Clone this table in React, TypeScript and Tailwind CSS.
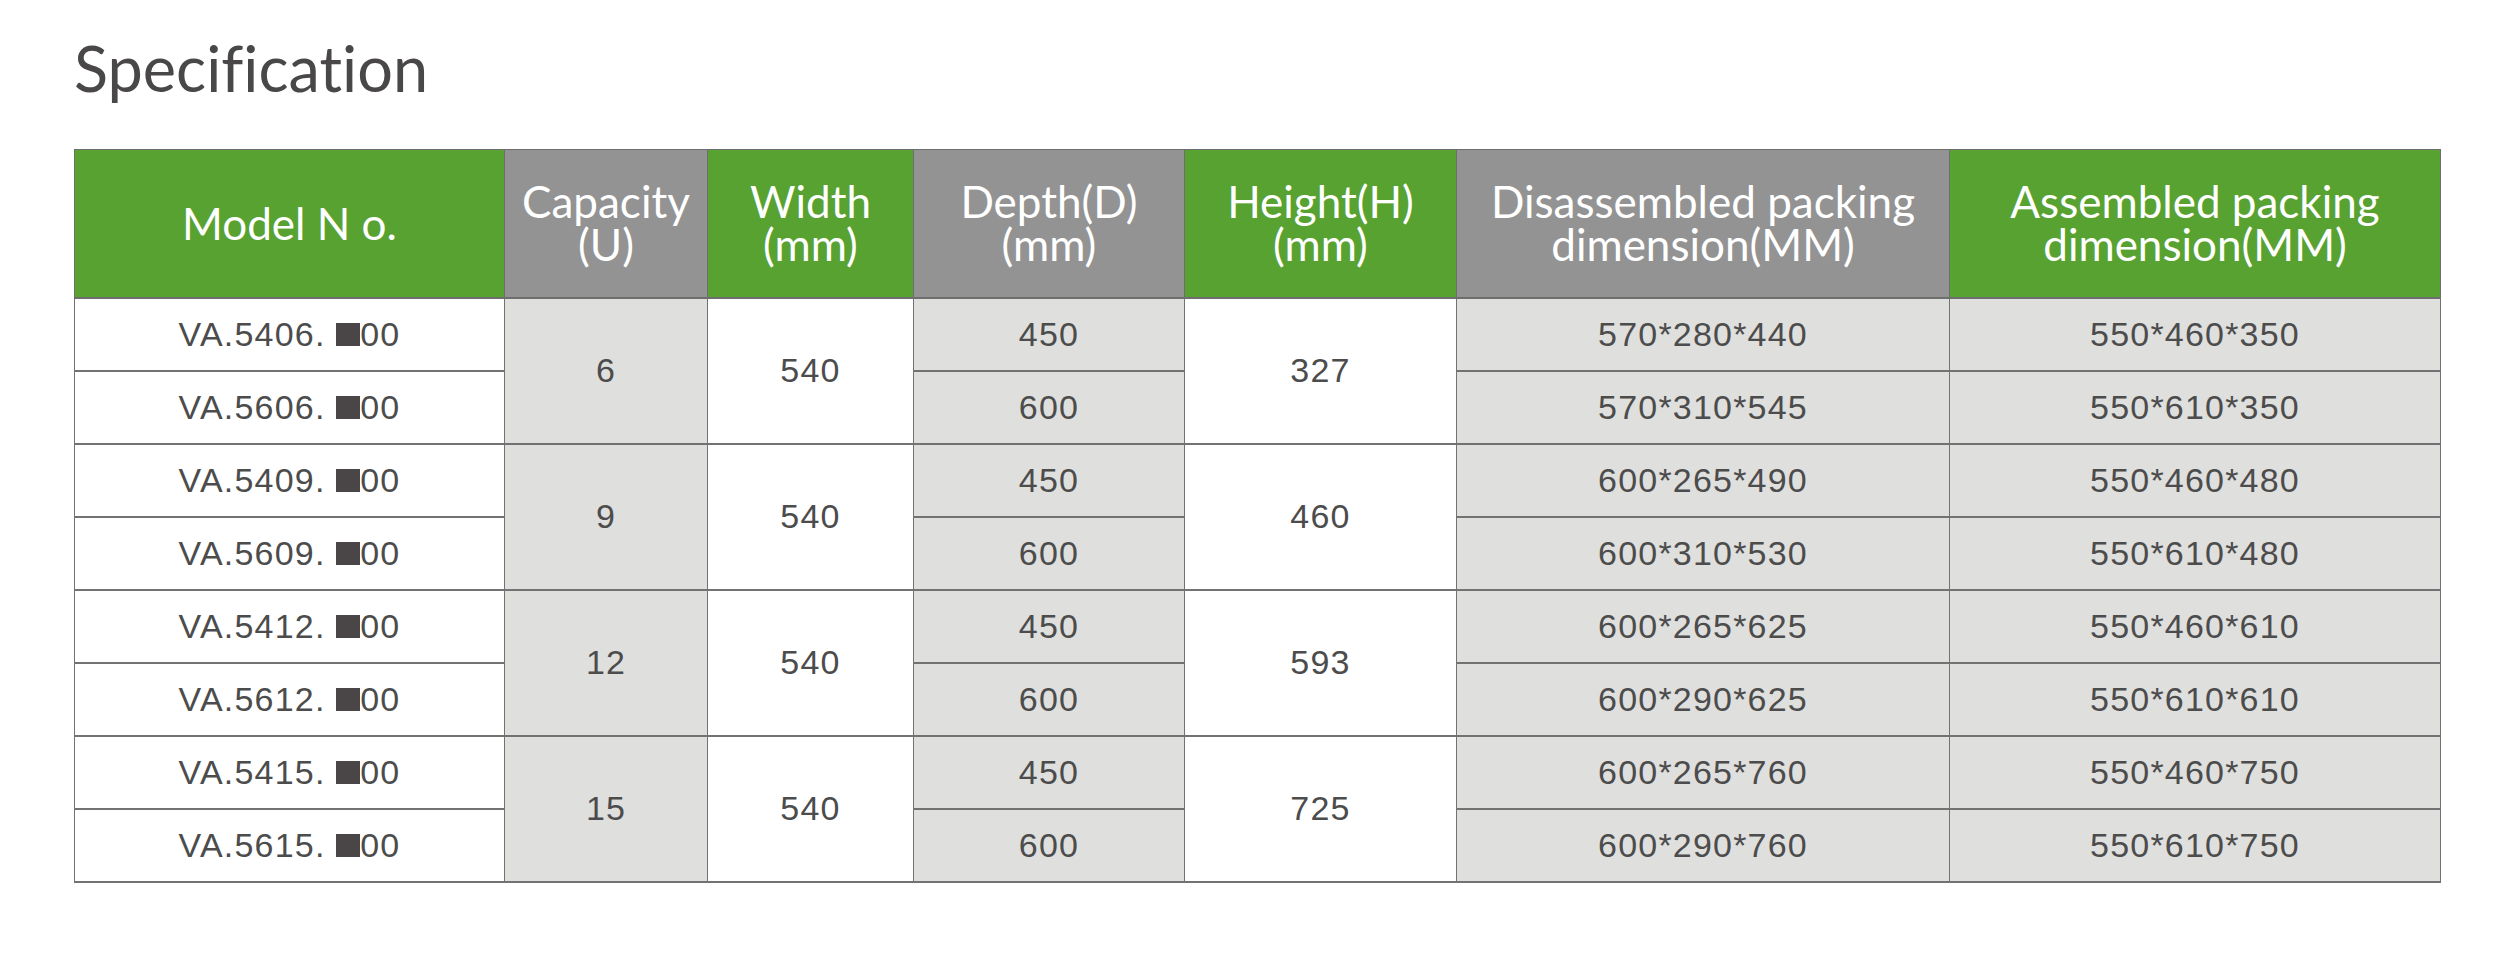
import React from 'react';

type Item = { model: string; depth: string; dis: string; asm: string };
type Group = { cap: string; width: string; height: string; items: Item[] };

const groups: Group[] = [
    {
        cap: '6', width: '540', height: '327', items: [
            { model: 'VA.5406.', depth: '450', dis: '570*280*440', asm: '550*460*350' },
            { model: 'VA.5606.', depth: '600', dis: '570*310*545', asm: '550*610*350' },
        ],
    },
    {
        cap: '9', width: '540', height: '460', items: [
            { model: 'VA.5409.', depth: '450', dis: '600*265*490', asm: '550*460*480' },
            { model: 'VA.5609.', depth: '600', dis: '600*310*530', asm: '550*610*480' },
        ],
    },
    {
        cap: '12', width: '540', height: '593', items: [
            { model: 'VA.5412.', depth: '450', dis: '600*265*625', asm: '550*460*610' },
            { model: 'VA.5612.', depth: '600', dis: '600*290*625', asm: '550*610*610' },
        ],
    },
    {
        cap: '15', width: '540', height: '725', items: [
            { model: 'VA.5415.', depth: '450', dis: '600*265*760', asm: '550*460*750' },
            { model: 'VA.5615.', depth: '600', dis: '600*290*760', asm: '550*610*750' },
        ],
    },
];

const headers = [
    { lines: ['Model N o.'], green: true, w: 'w-[430px]' },
    { lines: ['Capacity', '(U)'], green: false, w: 'w-[203px]' },
    { lines: ['Width', '(mm)'], green: true, w: 'w-[206px]' },
    { lines: ['Depth(D)', '(mm)'], green: false, w: 'w-[271px]' },
    { lines: ['Height(H)', '(mm)'], green: true, w: 'w-[272px]' },
    { lines: ['Disassembled packing', 'dimension(MM)'], green: false, w: 'w-[493px]' },
    { lines: ['Assembled packing', 'dimension(MM)'], green: true, w: 'w-[491px]' },
];

const cell = 'h-[73px] p-0 text-center align-middle border-x border-y-2 border-[#727272]';

export default function App() {
    return (
        <div className="min-h-screen bg-white pl-[74px] pt-[36px] [font-variant-ligatures:none]">
            <h1 className="text-[63px] leading-[63px] font-normal text-[#4a4748] font-['Lato',sans-serif]">
                Specification
            </h1>

            <table className="mt-[50px] w-[2366px] table-fixed border-collapse font-['Liberation_Sans',Arial,sans-serif] text-[34px] tracking-[1.2px] text-[#4c4c4c]">
                <colgroup>
                    {headers.map((h, i) => (
                        <col key={i} className={h.w} />
                    ))}
                </colgroup>
                <thead>
                    <tr>
                        {headers.map((h, i) => (
                            <th
                                key={i}
                                className={`h-[148px] p-0 text-center align-middle border-x border-t border-b-2 border-[#6e6e6e] font-['Lato',sans-serif] font-normal text-[44px] leading-[43px] tracking-normal text-white ${h.green ? 'bg-[#58a232]' : 'bg-[#939393]'}`}
                            >
                                {h.lines.map((l, j) => (
                                    <div key={j}>{l}</div>
                                ))}
                            </th>
                        ))}
                    </tr>
                </thead>
                <tbody>
                    {groups.map((g) =>
                        g.items.map((it, idx) => (
                            <tr key={it.model}>
                                <td className={`${cell} bg-white`}>
                                    {it.model}{' '}
                                    <span className="inline-block w-[24px] h-[23px] bg-[#4a4547] align-baseline" />
                                    00
                                </td>
                                {idx === 0 && (
                                    <td rowSpan={2} className={`${cell} bg-[#dfdfde]`}>{g.cap}</td>
                                )}
                                {idx === 0 && (
                                    <td rowSpan={2} className={`${cell} bg-white`}>{g.width}</td>
                                )}
                                <td className={`${cell} bg-[#dfdfde]`}>{it.depth}</td>
                                {idx === 0 && (
                                    <td rowSpan={2} className={`${cell} bg-white`}>{g.height}</td>
                                )}
                                <td className={`${cell} bg-[#dfdfde]`}>{it.dis}</td>
                                <td className={`${cell} bg-[#dfdfde]`}>{it.asm}</td>
                            </tr>
                        ))
                    )}
                </tbody>
            </table>
        </div>
    );
}
